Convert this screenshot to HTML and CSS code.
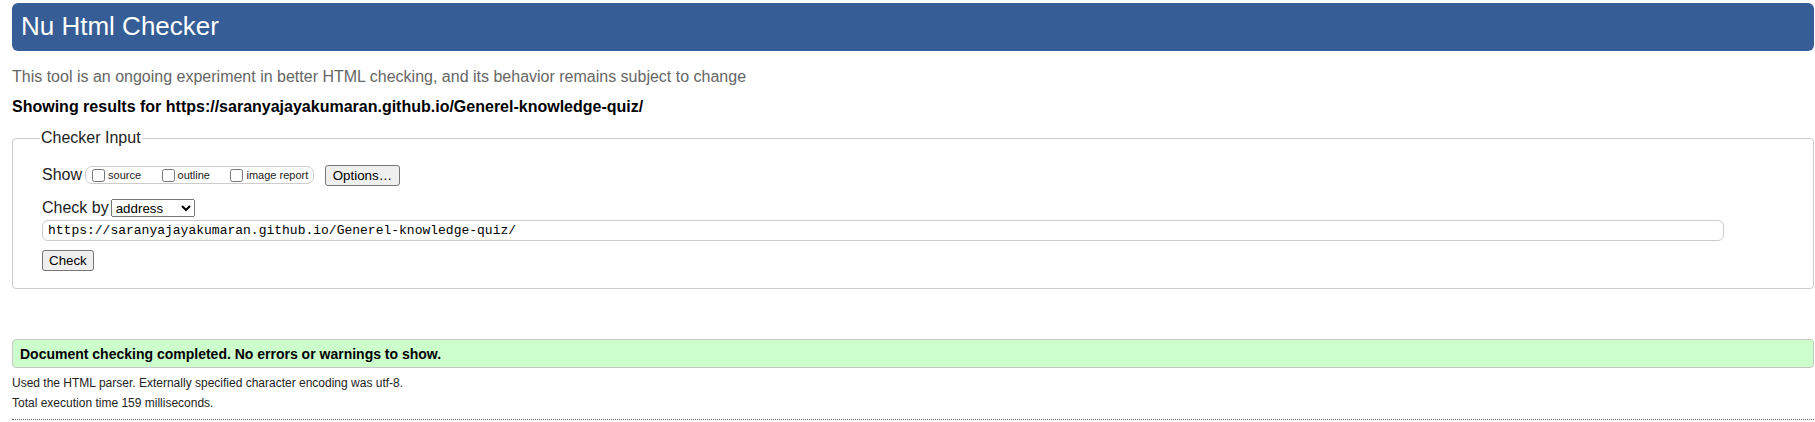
FILE: index.html
```html
<!DOCTYPE html>
<html lang="en">
<head>
<meta charset="utf-8">
<title>Nu Html Checker</title>
<link rel="stylesheet" href="styles.css">
</head>
<body>
<h1 class="title">Nu Html Checker</h1>
<p class="intro">This tool is an ongoing experiment in better HTML checking, and its behavior remains subject to change</p>
<p class="results-for">Showing results for https://saranyajayakumaran.github.io/Generel-knowledge-quiz/</p>
<form class="checker">
  <fieldset class="checker-input">
    <legend class="legend">Checker Input</legend>
    <div class="row show-row">
      <span class="row-label">Show</span>
      <span class="show-box">
        <label class="opt"><input type="checkbox" class="cb">source</label>
        <label class="opt"><input type="checkbox" class="cb">outline</label>
        <label class="opt"><input type="checkbox" class="cb">image report</label>
      </span>
      <button type="button" class="btn options-btn">Options…</button>
    </div>
    <div class="row by-row">
      <label class="row-label by-label">Check by</label>
      <select class="select"><option>address</option></select>
    </div>
    <input class="url" type="text" value="https://saranyajayakumaran.github.io/Generel-knowledge-quiz/">
    <button type="button" class="btn check-btn">Check</button>
  </fieldset>
</form>
<div class="success">Document checking completed. No errors or warnings to show.</div>
<div class="details">
  <p class="note">Used the HTML parser. Externally specified character encoding was utf-8.</p>
  <p class="note">Total execution time 159 milliseconds.</p>
</div>
</body>
</html>
```
FILE: styles.css
```css
html, body {
  margin: 0;
  background: #fff;
}
body {
  padding: 3px 1px 0 12px;
  font-family: "Liberation Sans", Arial, sans-serif;
  color: #000;
}
.title {
  margin: 0;
  height: 48px;
  box-sizing: border-box;
  padding: 0 9px;
  background: #365d95;
  color: #fff;
  font-size: 26px;
  font-weight: normal;
  line-height: 46px;
  border-radius: 6px;
}
.intro {
  margin: 16.5px 0 0;
  font-size: 16px;
  color: #666;
}
.results-for {
  margin: 12px 0 0;
  font-size: 16px;
  font-weight: bold;
}
.checker {
  margin: 13px 0 0;
}
.checker-input {
  margin: 0;
  padding: 16.2px 0 17px 29px;
  border: 1px solid #ccc;
  border-radius: 4px;
  min-width: 0;
}
.legend {
  padding: 0 1px 2px;
  margin-left: -2px;
  font-size: 16px;
  color: #222;
}
.row {
  display: flex;
  align-items: center;
}
.row-label {
  font-size: 16px;
  color: #222;
}
.show-box {
  display: flex;
  align-items: center;
  gap: 16.5px;
  box-sizing: border-box;
  height: 18px;
  margin-left: 3px;
  padding: 0 5px 0 2px;
  border: 1px solid #ccc;
  border-radius: 7px;
}
.opt {
  display: flex;
  align-items: center;
  font-size: 11px;
  color: #222;
}
.cb {
  width: 13px;
  height: 13px;
  margin: 0 3px 0 4px;
}
.btn {
  box-sizing: border-box;
  height: 21px;
  border: 1px solid #767676;
  border-radius: 3px;
  background: #efefef;
  color: #000;
  font-family: "Liberation Sans", Arial, sans-serif;
  font-size: 13.33px;
  padding: 0 6px;
}
.options-btn {
  margin-left: 10.5px;
  padding: 0 7px;
}
.by-row {
  margin-top: 13px;
}
.select {
  margin-left: 2px;
  width: 84px;
  height: 18px;
  font-family: "Liberation Sans", Arial, sans-serif;
  font-size: 13.33px;
  color: #000;
}
.url {
  display: block;
  box-sizing: border-box;
  width: 95%;
  height: 21px;
  margin-top: 3.5px;
  padding: 0 5px;
  border: 1px solid #ccc;
  border-radius: 6px;
  font-family: "Liberation Mono", "DejaVu Sans Mono", monospace;
  font-size: 13px;
  color: #000;
  outline: none;
}
.check-btn {
  display: block;
  margin-top: 8.5px;
}
.success {
  margin-top: 50.5px;
  padding: 5.5px 7px;
  background: #ccffcc;
  border: 1px solid #c6c6c6;
  border-radius: 4px;
  font-size: 14px;
  font-weight: bold;
}
.details {
  margin-top: 8.3px;
  padding-bottom: 9px;
  border-bottom: 1px dotted #666;
}
.note {
  margin: 0;
  font-size: 12px;
  line-height: 14px;
  color: #222;
}
.note + .note {
  margin-top: 5.8px;
}
```
